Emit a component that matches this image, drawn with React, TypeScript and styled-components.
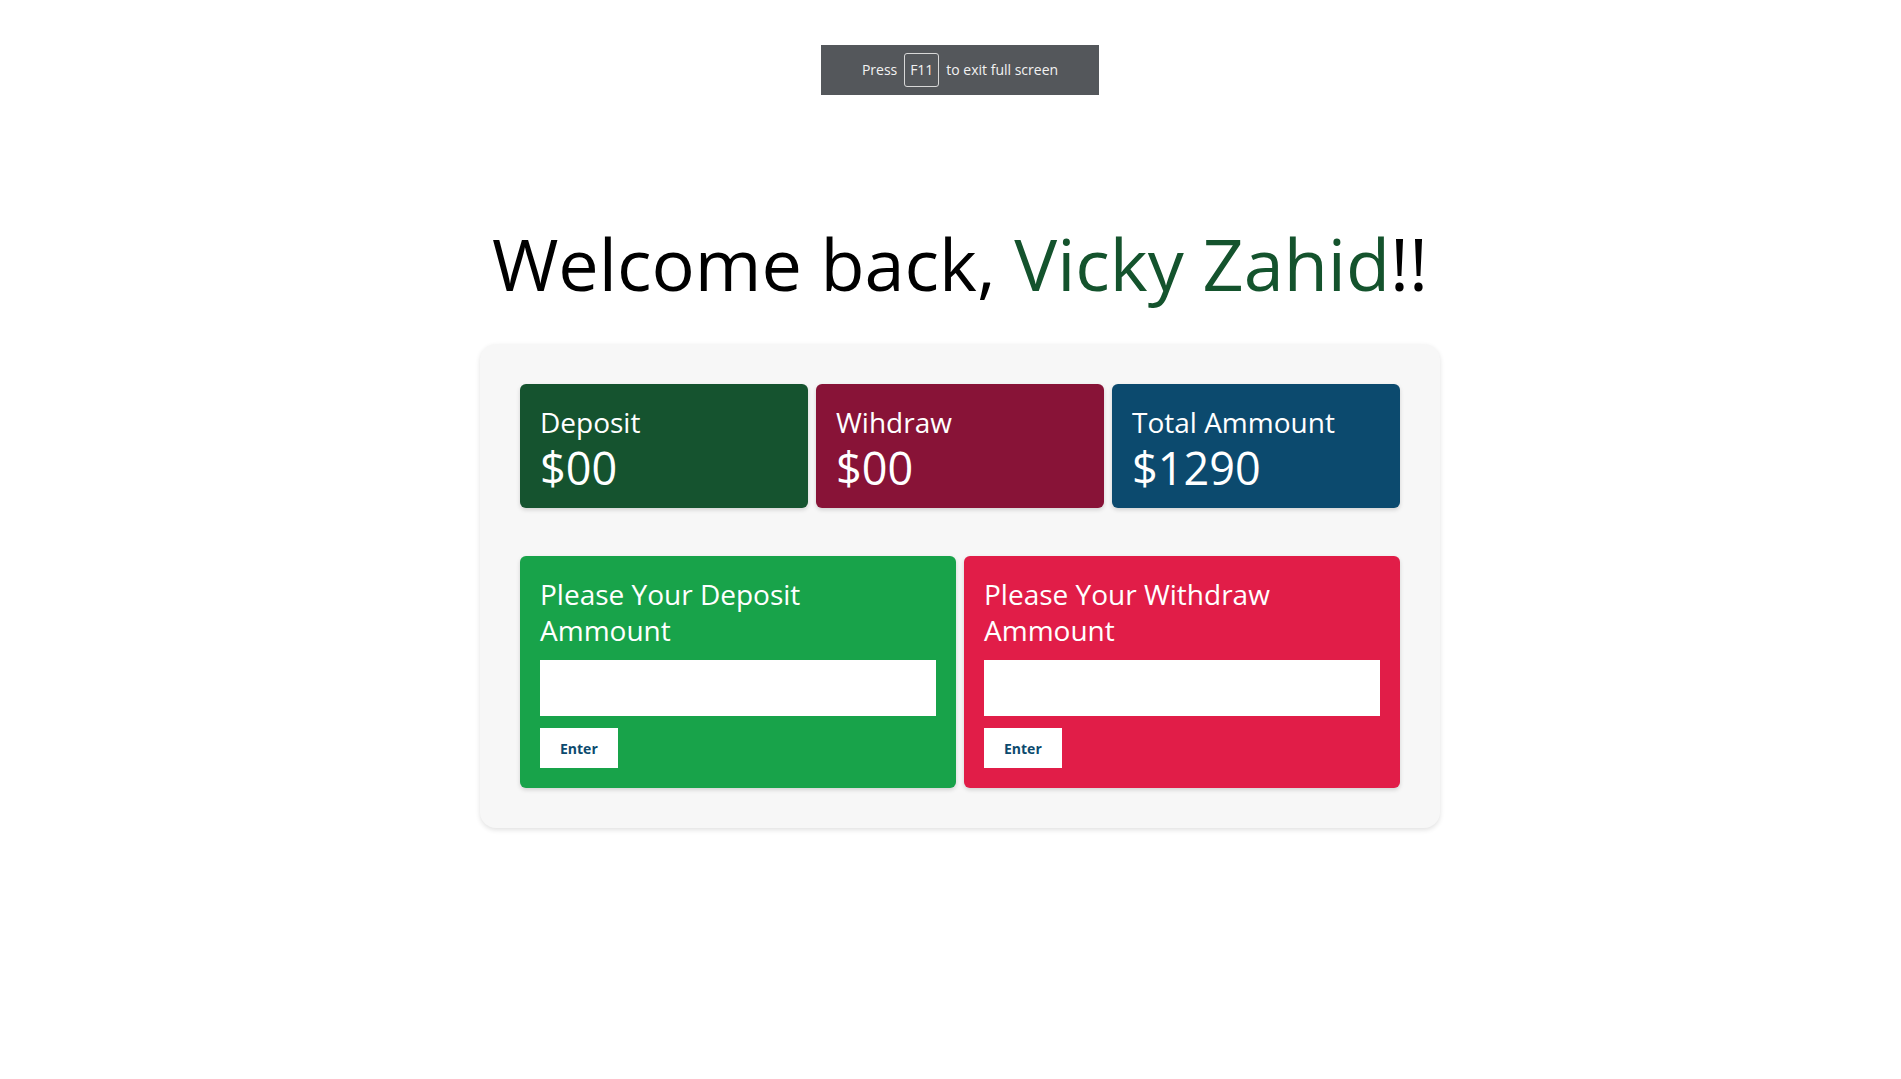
import React from "react";
import styled, { createGlobalStyle } from "styled-components";

const GlobalStyle = createGlobalStyle`
  html, body { margin: 0; padding: 0; background: #ffffff; }
  body { font-family: "Open Sans", "Noto Sans", sans-serif; color: #000; }
  *, *::before, *::after { box-sizing: border-box; }
`;

const Page = styled.main`
  min-height: 1079px;
  padding: 220px 0 0 19px;
  display: flex;
  flex-direction: column;
  align-items: center;
`;

const Overlay = styled.div`
  position: absolute;
  top: 45px;
  left: 0;
  right: 0;
  padding-left: 19px;
  display: flex;
  justify-content: center;
  pointer-events: none;
`;

const Toast = styled.div`
  width: 278px;
  height: 50px;
  padding-bottom: 1px;
  background: #54575b;
  color: #f2f2f2;
  font-family: "Open Sans", "Noto Sans", sans-serif;
  font-size: 14px;
  display: flex;
  align-items: center;
  justify-content: center;
  gap: 7px;
`;

const Key = styled.span`
  display: inline-flex;
  align-items: center;
  justify-content: center;
  width: 35px;
  height: 34px;
  border: 1px solid #d8d8d8;
  border-radius: 3px;
`;

const Heading = styled.h1`
  margin: 0 0 38px;
  font-size: 72px;
  line-height: 86px;
  font-weight: 400;
  color: #000;
  white-space: nowrap;
`;

const Name = styled.span`
  color: #14532d;
`;

const Panel = styled.section`
  width: 960px;
  padding: 40px;
  background: #f7f7f7;
  border-radius: 16px;
  box-shadow: 0 2px 5px rgba(0, 0, 0, 0.12);
`;

const StatRow = styled.div`
  display: grid;
  grid-template-columns: repeat(3, 1fr);
  gap: 8px;
`;

const StatCard = styled.div<{ $bg: string }>`
  background: ${(p) => p.$bg};
  color: #fff;
  border-radius: 6px;
  padding: 20px 20px 15px;
  box-shadow: 0 2px 4px rgba(0, 0, 0, 0.15);
`;

const StatLabel = styled.h3`
  margin: 0 0 3px;
  font-size: 28px;
  line-height: 36px;
  font-weight: 400;
`;

const StatValue = styled.h2`
  margin: 0;
  font-size: 45px;
  line-height: 50px;
  font-weight: 400;
`;

const ActionRow = styled.div`
  display: grid;
  grid-template-columns: repeat(2, 1fr);
  gap: 8px;
  margin-top: 48px;
`;

const ActionCard = styled.div<{ $bg: string }>`
  background: ${(p) => p.$bg};
  color: #fff;
  border-radius: 6px;
  padding: 20px;
  display: flex;
  flex-direction: column;
  align-items: flex-start;
  box-shadow: 0 2px 4px rgba(0, 0, 0, 0.15);
`;

const ActionTitle = styled.h3`
  margin: 0;
  max-width: 340px;
  font-size: 28px;
  line-height: 36px;
  font-weight: 400;
`;

const AmountInput = styled.input`
  margin-top: 12px;
  width: 100%;
  height: 56px;
  border: none;
  outline: none;
  background: #fff;
  padding: 0 12px;
  font-size: 18px;
  font-family: inherit;
`;

const EnterButton = styled.button`
  margin-top: 12px;
  height: 40px;
  padding: 0 20px;
  border: none;
  background: #fff;
  color: #0c4a6e;
  font-family: "Open Sans", "Noto Sans", sans-serif;
  font-weight: 700;
  font-size: 14px;
  cursor: pointer;
`;

export default function App() {
  return (
    <>
      <GlobalStyle />
      <Overlay>
        <Toast>
          <span>Press</span>
          <Key>F11</Key>
          <span>to exit full screen</span>
        </Toast>
      </Overlay>
      <Page>
        <Heading>
          Welcome back, <Name>Vicky Zahid</Name>!!
        </Heading>
        <Panel>
          <StatRow>
            <StatCard $bg="#15532f">
              <StatLabel>Deposit</StatLabel>
              <StatValue>$00</StatValue>
            </StatCard>
            <StatCard $bg="#881337">
              <StatLabel>Wihdraw</StatLabel>
              <StatValue>$00</StatValue>
            </StatCard>
            <StatCard $bg="#0c4a6e">
              <StatLabel>Total Ammount</StatLabel>
              <StatValue>$1290</StatValue>
            </StatCard>
          </StatRow>
          <ActionRow>
            <ActionCard $bg="#18a34a">
              <ActionTitle>Please Your Deposit Ammount</ActionTitle>
              <AmountInput type="number" />
              <EnterButton>Enter</EnterButton>
            </ActionCard>
            <ActionCard $bg="#e11d48">
              <ActionTitle>Please Your Withdraw Ammount</ActionTitle>
              <AmountInput type="number" />
              <EnterButton>Enter</EnterButton>
            </ActionCard>
          </ActionRow>
        </Panel>
      </Page>
    </>
  );
}
